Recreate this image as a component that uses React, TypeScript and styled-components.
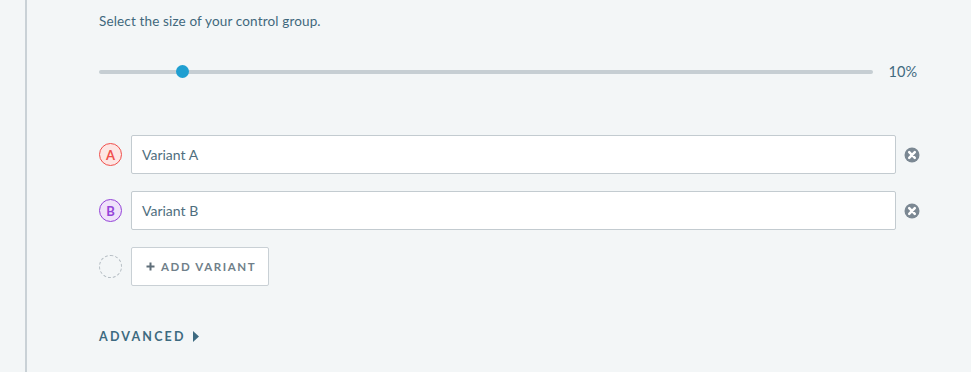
import React from "react";
import styled, { createGlobalStyle } from "styled-components";

const Global = createGlobalStyle`
  html, body { margin: 0; padding: 0; background: #f3f6f7; }
  body { font-family: Lato, "Open Sans", sans-serif; }
`;

const Page = styled.div`
  display: flex;
  min-height: 372px;
  background: #f3f6f7;
`;

const Rail = styled.div`
  width: 25px;
  flex: none;
  border-right: 2px solid #c9d1d6;
`;

const Content = styled.div`
  flex: 1;
  padding: 13px 51px 0 72px;
  display: flex;
  flex-direction: column;
`;

const Prompt = styled.div`
  font-size: 13.5px;
  line-height: 16px;
  color: #3f687c;
  letter-spacing: 0.15px;
`;

const SliderRow = styled.div`
  display: flex;
  align-items: center;
  margin-top: 34px;
  height: 17px;
`;

const Track = styled.div`
  position: relative;
  flex: 1;
  height: 4px;
  border-radius: 2px;
  background: #c6ced3;
`;

const Thumb = styled.div`
  position: absolute;
  top: -5px;
  width: 13px;
  height: 13px;
  border-radius: 50%;
  background: #1f9fd1;
`;

const Percent = styled.div`
  width: 44px;
  padding-right: 3px;
  flex: none;
  text-align: right;
  font-size: 14.5px;
  color: #3f6a80;
`;

const Variants = styled.div`
  display: flex;
  flex-direction: column;
  gap: 17px;
  margin-top: 55px;
`;

const Row = styled.div`
  display: flex;
  align-items: center;
`;

const Badge = styled.div<{ $color: string; $fill: string }>`
  width: 23px;
  height: 23px;
  box-sizing: border-box;
  border-radius: 50%;
  border: 1.5px solid ${(p) => p.$color};
  background: ${(p) => p.$fill};
  color: ${(p) => p.$color};
  font-size: 13px;
  font-weight: 700;
  display: flex;
  align-items: center;
  justify-content: center;
  flex: none;
`;

const EmptyBadge = styled.div`
  width: 23px;
  height: 23px;
  box-sizing: border-box;
  border-radius: 50%;
  border: 1px dashed #b6bec4;
  flex: none;
`;

const Input = styled.div`
  margin-left: 9px;
  flex: 1;
  height: 39px;
  box-sizing: border-box;
  background: #fff;
  border: 1px solid #c3cbd0;
  border-radius: 2px;
  padding: 0 10px;
  display: flex;
  align-items: center;
  font-size: 14px;
  color: #4f6e7e;
`;

const Close = styled.div`
  margin-left: 8px;
  width: 16px;
  height: 16px;
  flex: none;
  display: flex;
  align-items: center;
  justify-content: center;
`;

const AddButton = styled.div`
  margin-left: 9px;
  width: 138px;
  height: 39px;
  box-sizing: border-box;
  background: #fff;
  border: 1px solid #c9d0d5;
  border-radius: 2px;
  display: flex;
  align-items: center;
  padding-left: 14px;
  gap: 6px;
  font-size: 11.5px;
  font-weight: 700;
  letter-spacing: 1.6px;
  color: #707f8a;
`;

const Advanced = styled.div`
  margin-top: 43px;
  display: flex;
  align-items: center;
  gap: 7px;
  font-size: 12.5px;
  font-weight: 700;
  letter-spacing: 2.2px;
  color: #3d6a80;
`;

const CloseIcon = () => (
  <svg width="16" height="16" viewBox="0 0 16 16">
    <circle cx="8" cy="8" r="7.5" fill="#7b8893" />
    <path d="M5.2 5.2 L10.8 10.8 M10.8 5.2 L5.2 10.8" stroke="#fff" strokeWidth="2.5" strokeLinecap="round" />
  </svg>
);

const PlusIcon = () => (
  <svg width="9" height="9" viewBox="0 0 9 9">
    <path d="M4.5 0.5 V8.5 M0.5 4.5 H8.5" stroke="#5f6e79" strokeWidth="2" />
  </svg>
);

const Caret = () => (
  <svg width="6" height="11" viewBox="0 0 6 11">
    <path d="M0 0 L6 5.5 L0 11 Z" fill="#3d6a80" />
  </svg>
);

const variants = [
  { letter: "A", name: "Variant A", color: "#f0504c", fill: "#fde6e4" },
  { letter: "B", name: "Variant B", color: "#9444d8", fill: "#efe2fa" },
];

export default function App() {
  const value = 10;
  return (
    <>
      <Global />
      <Page>
        <Rail />
        <Content>
          <Prompt>Select the size of your control group.</Prompt>
          <SliderRow>
            <Track>
              <Thumb style={{ left: `${value}%` }} />
            </Track>
            <Percent>{value}%</Percent>
          </SliderRow>
          <Variants>
            {variants.map((v) => (
              <Row key={v.letter}>
                <Badge $color={v.color} $fill={v.fill}>{v.letter}</Badge>
                <Input>{v.name}</Input>
                <Close><CloseIcon /></Close>
              </Row>
            ))}
            <Row>
              <EmptyBadge />
              <AddButton><PlusIcon />ADD VARIANT</AddButton>
            </Row>
          </Variants>
          <Advanced>ADVANCED<Caret /></Advanced>
        </Content>
      </Page>
    </>
  );
}
